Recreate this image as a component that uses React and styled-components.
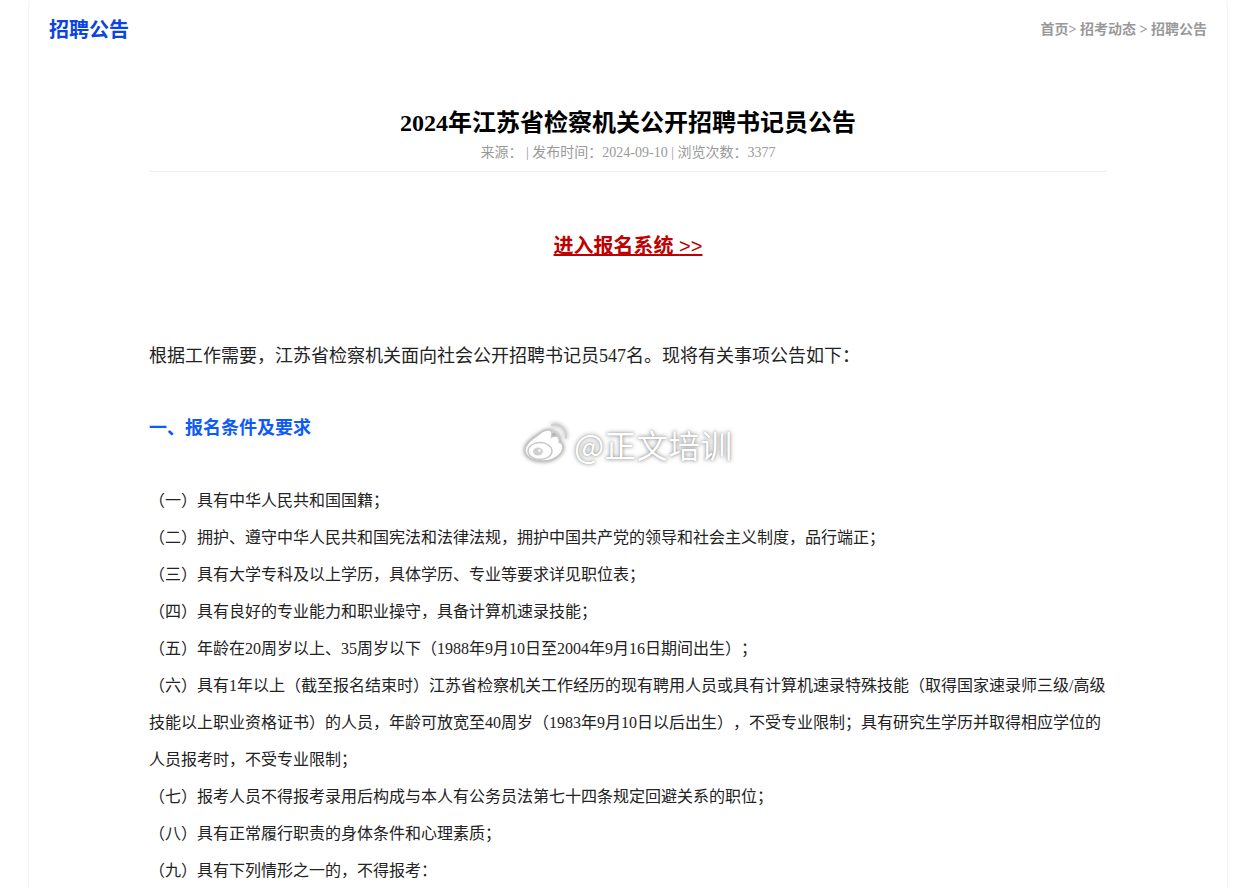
import styled, { createGlobalStyle } from 'styled-components';

const GlobalStyle = createGlobalStyle`
  html, body {
    margin: 0;
    padding: 0;
    height: 888px;
    overflow: hidden;
    background: #fff;
  }
  body {
    font-family: "Liberation Serif", "Noto Sans CJK SC", serif;
    color: #222;
    text-spacing-trim: space-all;
  }
`;

const Card = styled.div`
  position: relative;
  margin: -6px 32px 0 28px;
  padding: 6px 20px 60px;
  min-height: 1000px;
  background: #fff;
  border: 1px solid #f2f2f2;
  border-radius: 12px;
`;

const TopBar = styled.div`
  display: flex;
  justify-content: space-between;
  align-items: center;
  height: 54px;
`;

const PageName = styled.h2`
  margin: 0;
  font-size: 20px;
  font-weight: 700;
  color: #0b45e0;
  font-family: "Noto Sans CJK SC", sans-serif;
`;

const Crumbs = styled.div`
  font-size: 14px;
  font-weight: 700;
  color: #999;
`;

const Article = styled.div`
  margin: 0 100px;
`;

const ArticleHead = styled.div`
  margin-top: 50px;
  padding-bottom: 7px;
  border-bottom: 1px solid #f0f0f0;
  text-align: center;
`;

const Title = styled.h1`
  margin: 0;
  font-size: 24px;
  line-height: 36px;
  font-weight: 700;
  color: #000;
`;

const Meta = styled.div`
  margin-top: 1px;
  font-size: 14px;
  line-height: 22px;
  color: #999;
`;

const ApplyRow = styled.div`
  margin-top: 59px;
  text-align: center;
  line-height: 30px;
`;

const ApplyLink = styled.a`
  font-family: "Liberation Sans", "Noto Sans CJK SC", sans-serif;
  font-size: 20px;
  font-weight: 700;
  color: #c00000;
  text-decoration: underline;
  text-decoration-thickness: 2px;
`;

const Arrows = styled.span`
  font-weight: 400;
`;

const Intro = styled.p`
  margin: 75px 0 0;
  font-size: 18px;
  line-height: 36px;
  color: #222;
`;

const SectionTitle = styled.h3`
  margin: 34px 0 0;
  font-size: 18px;
  line-height: 36px;
  font-weight: 700;
  color: #0f5bf5;
  font-family: "Noto Sans CJK SC", sans-serif;
`;

const Clause = styled.p`
  margin: 0;
  font-size: 16px;
  line-height: 37px;
  color: #222;
`;

const ClauseList = styled.div`
  margin-top: 38px;
`;

const Watermark = styled.div`
  position: absolute;
  left: 495px;
  top: 428px;
  display: flex;
  align-items: center;
  gap: 6px;
  font-family: "Noto Sans CJK SC", sans-serif;
  font-size: 32px;
  line-height: 42px;
  color: #fff;
  text-shadow: 0 0 4px rgba(0, 0, 0, 0.5), 0 0 1px rgba(0, 0, 0, 0.3);
  pointer-events: none;
`;

const WatermarkLogo = styled.svg`
  width: 44px;
  height: 42px;
  filter: drop-shadow(0 0 2px rgba(0, 0, 0, 0.45));
`;

const clauses = [
  '（一）具有中华人民共和国国籍；',
  '（二）拥护、遵守中华人民共和国宪法和法律法规，拥护中国共产党的领导和社会主义制度，品行端正；',
  '（三）具有大学专科及以上学历，具体学历、专业等要求详见职位表；',
  '（四）具有良好的专业能力和职业操守，具备计算机速录技能；',
  '（五）年龄在20周岁以上、35周岁以下（1988年9月10日至2004年9月16日期间出生）；',
  '（六）具有1年以上（截至报名结束时）江苏省检察机关工作经历的现有聘用人员或具有计算机速录特殊技能（取得国家速录师三级/高级技能以上职业资格证书）的人员，年龄可放宽至40周岁（1983年9月10日以后出生），不受专业限制；具有研究生学历并取得相应学位的人员报考时，不受专业限制；',
  '（七）报考人员不得报考录用后构成与本人有公务员法第七十四条规定回避关系的职位；',
  '（八）具有正常履行职责的身体条件和心理素质；',
  '（九）具有下列情形之一的，不得报考：',
];

function WeiboMark() {
  return (
    <WatermarkLogo viewBox="0 0 44 42" fill="none">
      <path
        d="M14 12c6-5 11-6 13-4 1.500 1.500 1 4 .5 6 3-1.500 7-1.500 8 .5.7 1.500.2 3-.5 4.500 2.500.8 4 2.500 4 5 0 7-9 14-20 14C9 38 1 34 1 27c0-4 5-10 13-15z"
        fill="#fff"
        stroke="#c6c6c6"
        strokeWidth="1.500"
      />
      <ellipse cx="16" cy="28" rx="12" ry="8.500" fill="#fff" stroke="#c6c6c6" strokeWidth="1.500" />
      <ellipse cx="14" cy="28.500" rx="5" ry="4" fill="#d0d0d0" />
      <circle cx="15.500" cy="27.500" r="1.200" fill="#fff" />
      <path d="M28 9c4-1 7 2 6.500 6.500" stroke="#cfcfcf" strokeWidth="2" strokeLinecap="round" />
      <path d="M28 2c8-2 15 4 14 13" stroke="#cfcfcf" strokeWidth="2" strokeLinecap="round" />
    </WatermarkLogo>
  );
}

export default function App() {
  return (
    <Card>
      <GlobalStyle />
      <TopBar>
        <PageName>招聘公告</PageName>
        <Crumbs>首页&gt; 招考动态 &gt; 招聘公告</Crumbs>
      </TopBar>
      <Article>
        <ArticleHead>
          <Title>2024年江苏省检察机关公开招聘书记员公告</Title>
          <Meta>来源： | 发布时间：2024-09-10 | 浏览次数：3377</Meta>
        </ArticleHead>
        <ApplyRow>
          <ApplyLink href="#">进入报名系统 <Arrows>&gt;&gt;</Arrows></ApplyLink>
        </ApplyRow>
        <Intro>根据工作需要，江苏省检察机关面向社会公开招聘书记员547名。现将有关事项公告如下：</Intro>
        <SectionTitle>一、报名条件及要求</SectionTitle>
        <ClauseList>
          {clauses.map((text) => (
            <Clause key={text}>{text}</Clause>
          ))}
        </ClauseList>
      </Article>
      <Watermark>
        <WeiboMark />
        @正文培训
      </Watermark>
    </Card>
  );
}
